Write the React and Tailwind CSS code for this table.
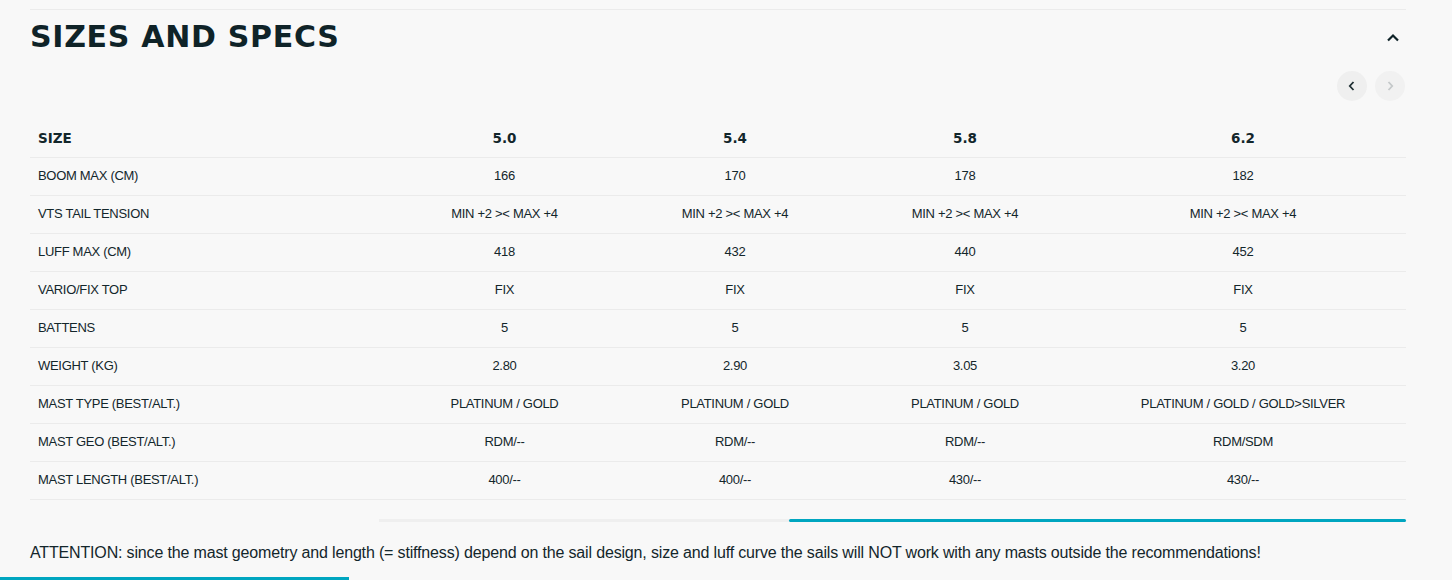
import React from "react";

const cols = ["5.0", "5.4", "5.8", "6.2"];
const rows = [
  ["BOOM MAX (CM)", "166", "170", "178", "182"],
  ["VTS TAIL TENSION", "MIN +2 >< MAX +4", "MIN +2 >< MAX +4", "MIN +2 >< MAX +4", "MIN +2 >< MAX +4"],
  ["LUFF MAX (CM)", "418", "432", "440", "452"],
  ["VARIO/FIX TOP", "FIX", "FIX", "FIX", "FIX"],
  ["BATTENS", "5", "5", "5", "5"],
  ["WEIGHT (KG)", "2.80", "2.90", "3.05", "3.20"],
  ["MAST TYPE (BEST/ALT.)", "PLATINUM / GOLD", "PLATINUM / GOLD", "PLATINUM / GOLD", "PLATINUM / GOLD / GOLD>SILVER"],
  ["MAST GEO (BEST/ALT.)", "RDM/--", "RDM/--", "RDM/--", "RDM/SDM"],
  ["MAST LENGTH (BEST/ALT.)", "400/--", "400/--", "430/--", "430/--"],
];

const widths = ["w-[359px]", "w-[231px]", "w-[230px]", "w-[230px]", "w-[326px]"];

export default function App() {
  return (
    <div className="w-full h-[580px] bg-[#f8f8f8] overflow-hidden relative text-[#13262b]" style={{ fontFamily: '"Liberation Sans", Arial, sans-serif' }}>
      <div className="ml-[30px] w-[1376px] pt-[9px]">
        <div className="border-t border-[#ebebeb]" />
        <div className="flex items-center justify-between h-[54px]">
          <h2 className="text-[30px] font-bold leading-none text-[#0f2328] tracking-[0.7px]" style={{ fontFamily: '"DejaVu Sans", sans-serif' }}>
            SIZES AND SPECS
          </h2>
          <svg width="14" height="10" viewBox="0 0 14 10" className="mr-[6px] mt-[2px]">
            <path d="M2 7.5 L7 2.5 L12 7.5" fill="none" stroke="#0f2328" strokeWidth="2.2" />
          </svg>
        </div>
        <div className="flex justify-end gap-[8px] h-[32px] items-center mt-[6px]">
          <div className="w-[30px] h-[30px] rounded-full bg-[#efefef] flex items-center justify-center">
            <svg width="10" height="12" viewBox="0 0 10 12">
              <path d="M6.5 2 L2.8 6 L6.5 10" fill="none" stroke="#1f2f33" strokeWidth="1.8" />
            </svg>
          </div>
          <div className="w-[30px] h-[30px] rounded-full bg-[#f1f1f1] flex items-center justify-center mr-[1px]">
            <svg width="10" height="12" viewBox="0 0 10 12">
              <path d="M3.5 2 L7.2 6 L3.5 10" fill="none" stroke="#c4c8c9" strokeWidth="1.8" />
            </svg>
          </div>
        </div>
        <table className="mt-[17px] border-collapse table-fixed w-[1376px]">
          <thead>
            <tr className="border-b border-[#ebebeb] h-[38px]">
              <th className={`${widths[0]} text-left pl-[8px] text-[13.5px] font-bold`} style={{ fontFamily: '"DejaVu Sans", sans-serif' }}>SIZE</th>
              {cols.map((c, i) => (
                <th key={c} className={`${widths[i + 1]} text-center text-[13.5px] font-bold`} style={{ fontFamily: '"DejaVu Sans", sans-serif' }}>{c}</th>
              ))}
            </tr>
          </thead>
          <tbody>
            {rows.map((r) => (
              <tr key={r[0]} className="border-b border-[#ebebeb] h-[38px]">
                {r.map((v, i) => (
                  <td key={i} className={`text-[13px] tracking-[-0.3px] ${i === 0 ? "text-left pl-[8px]" : "text-center"}`}>{v}</td>
                ))}
              </tr>
            ))}
          </tbody>
        </table>
        <div className="mt-[19px] ml-[349px] h-[3px] bg-[#efefef] flex">
          <div className="w-[410px]" />
          <div className="flex-1 bg-[#00a6c0] rounded-full" />
        </div>
        <p className="mt-[21px] text-[16px] leading-[20px] tracking-[-0.16px]">
          ATTENTION: since the mast geometry and length (= stiffness) depend on the sail design, size and luff curve the sails will NOT work with any masts outside the recommendations!
        </p>
      </div>
      <div className="absolute left-0 bottom-0 w-[349px] h-[3px] bg-[#00a6c0]" />
    </div>
  );
}
